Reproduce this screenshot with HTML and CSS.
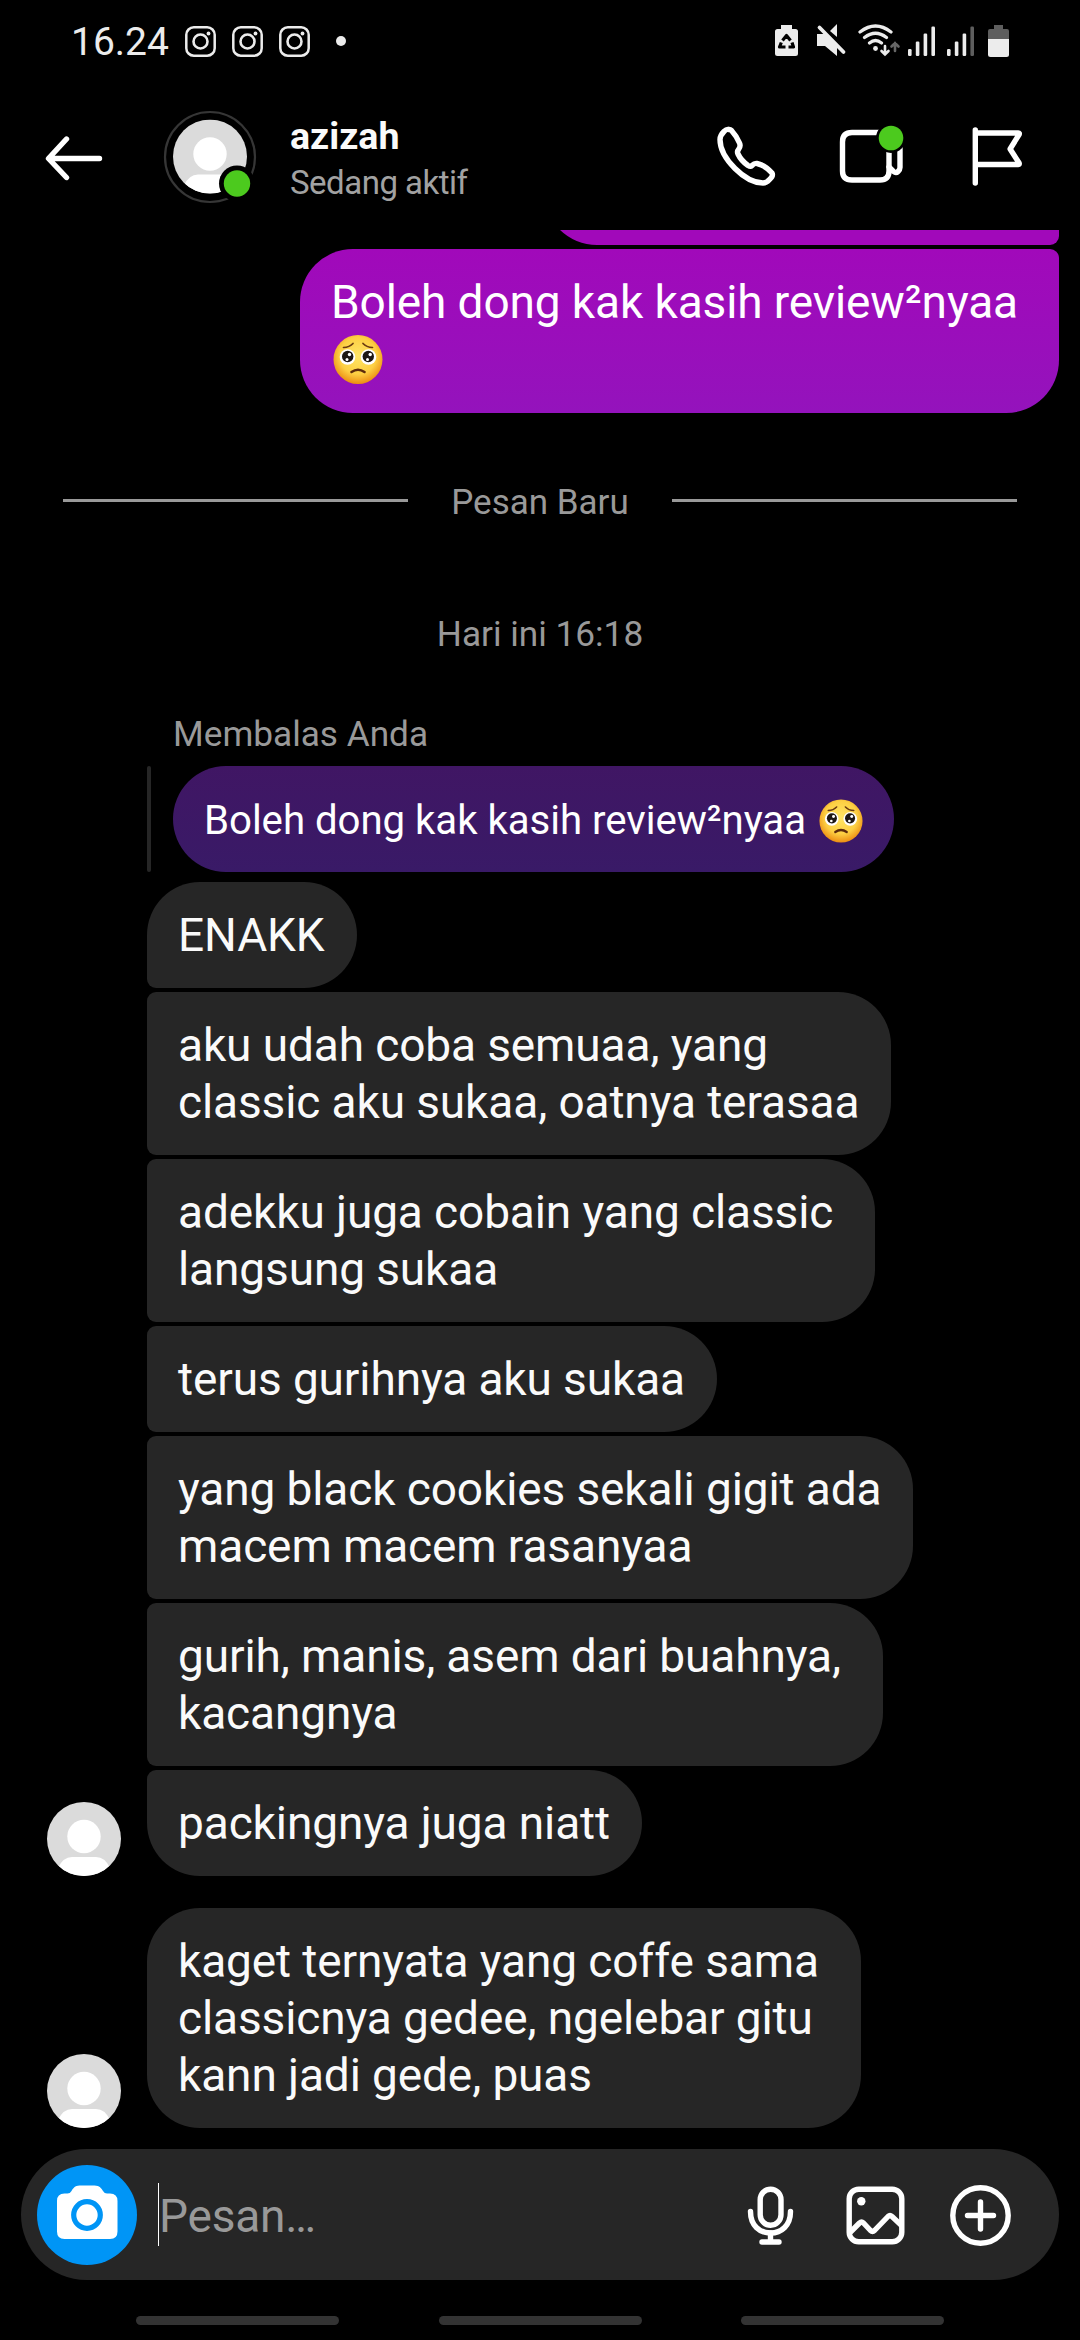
FILE: index.html
```html
<!DOCTYPE html>
<html lang="id">
<head>
<meta charset="utf-8">
<title>azizah</title>
<link rel="stylesheet" href="styles.css">
</head>
<body>
<svg class="defs" width="0" height="0">
  <defs>
    <radialGradient id="face" cx="50%" cy="42%" r="58%">
      <stop offset="0" stop-color="#ffe566"/><stop offset=".65" stop-color="#fdcf43"/><stop offset="1" stop-color="#ec8d12"/>
    </radialGradient>
    <clipPath id="disc"><circle cx="37" cy="37" r="37"/></clipPath>
    <symbol id="pleading" viewBox="0 0 50 50">
      <circle cx="25" cy="25" r="24.5" fill="url(#face)"/>
      <circle cx="14.500" cy="22.500" r="7.800" fill="#fff"/>
      <circle cx="35.500" cy="22.500" r="7.800" fill="#fff"/>
      <circle cx="14.700" cy="22" r="5.700" fill="#1d1715"/>
      <circle cx="35.300" cy="22" r="5.700" fill="#1d1715"/>
      <circle cx="16.500" cy="20" r="1.700" fill="#fff"/><circle cx="37.200" cy="20" r="1.700" fill="#fff"/>
      <circle cx="14" cy="25" r="1.500" fill="#fff"/><circle cx="34.500" cy="25" r="1.500" fill="#fff"/>
      <path d="M10.500 13q6-.2 9.500-4M39.500 13q-6-.2-9.500-4" fill="none" stroke="#6b3a10" stroke-width="1.700" stroke-linecap="round"/>
      <path d="M18.500 37.500q6.500-4.500 13 0" fill="none" stroke="#5c2a0c" stroke-width="2.600" stroke-linecap="round"/>
    </symbol>
    <symbol id="person" viewBox="0 0 74 74">
      <g clip-path="url(#disc)">
        <rect width="74" height="74" fill="#dbdbdb"/>
        <circle cx="37" cy="34.500" r="16.700" fill="#fff"/>
        <path d="M11 66q5-11 14-11h24q9 0 14 11v10H11z" fill="#fff"/>
      </g>
    </symbol>
    <symbol id="insta" viewBox="0 0 31 31">
      <rect x="1.300" y="1.300" width="28.400" height="28.400" rx="7.500" fill="none" stroke="#ececec" stroke-width="2.500"/>
      <circle cx="15.500" cy="15.500" r="7" fill="none" stroke="#ececec" stroke-width="2.600"/>
      <circle cx="23.500" cy="7.500" r="1.900" fill="#ececec"/>
    </symbol>
  </defs>
</svg>
<div class="screen">
  <div class="status">
    <span class="clock">16.24</span>
    <div class="notifs">
      <svg width="31" height="31"><use href="#insta"/></svg>
      <svg width="31" height="31"><use href="#insta"/></svg>
      <svg width="31" height="31"><use href="#insta"/></svg>
      <i class="more"></i>
    </div>
    <svg class="system" width="236" height="34" viewBox="774 24 236 34" fill="#ececec">
      <path d="M781 25h11v4h3.500q2.500 0 2.500 2.500v22q0 2.500-2.500 2.500h-18q-2.500 0-2.500-2.500v-22q0-2.500 2.500-2.500h3.500z"/>
      <g fill="none" stroke="#000" stroke-width="3.200" stroke-linejoin="round"><path d="M782.500 40.500l4-5 4 5M792 42.500l1.500 4.500h-5M785.500 47h-6l1.800-4.500"/></g>
      <path d="M830 31l7-7v13z"/>
      <path d="M817 34h8l12 13v9l-12-10h-8z"/>
      <path d="M822 26l24 24.500" stroke="#000" stroke-width="3"/>
      <path d="M819.500 27.500l24 24.500" stroke="#ececec" stroke-width="3.800" stroke-linecap="round"/>
      <g fill="none" stroke="#ececec" stroke-width="3.200" stroke-linecap="round">
        <path d="M860 32q15.500-12 31 0M864.500 37.500q11-8.500 22 0M869.500 43q6-5 12 0"/>
        <path d="M885 46v8M881.500 51l3.500 3.500 3.500-3.500" stroke-width="2.600"/>
        <path d="M895 51v-8M891.500 46.500l3.500-3.500 3.500 3.500" stroke="#666" stroke-width="2.600"/>
      </g>
      <circle cx="875.500" cy="48.500" r="2.400"/>
      <g><rect x="908" y="49" width="3.600" height="7" rx="1.200"/><rect x="915.800" y="41.500" width="3.600" height="14.500" rx="1.200"/><rect x="923.600" y="33.500" width="3.600" height="22.500" rx="1.200"/><rect x="931.400" y="26.500" width="3.600" height="29.500" rx="1.200"/></g>
      <g><rect x="947" y="49" width="3.600" height="7" rx="1.200"/><rect x="954.800" y="41.500" width="3.600" height="14.500" rx="1.200"/><rect x="962.600" y="33.500" width="3.600" height="22.500" rx="1.200"/><rect x="970.400" y="26.500" width="3.600" height="29.500" rx="1.200" fill="#5e5e5e"/></g>
      <path d="M994 25h9v4h4q2 0 2 2v8h-21v-8q0-2 2-2h4z" fill="#5e5e5e"/>
      <path d="M988 39h21v15.500q0 2.500-2.500 2.500h-16q-2.500 0-2.500-2.500z"/>
    </svg>
  </div>

  <div class="header">
    <svg class="back" width="58" height="46" viewBox="0 0 58 46" fill="none" stroke="#fff" stroke-width="5.400" stroke-linecap="round" stroke-linejoin="round"><path d="M54.500 22.500H4M21.500 3L3.500 22.500l18 19"/></svg>
    <svg class="avatar" width="94" height="94" viewBox="0 0 94 94">
      <circle cx="47" cy="47" r="45" fill="none" stroke="#363636" stroke-width="2.200"/>
      <use href="#person" x="10" y="9.500" width="74" height="74"/>
      <circle cx="74" cy="73.500" r="18" fill="#000"/>
      <circle cx="74" cy="73.500" r="13.200" fill="#4cca1e"/>
    </svg>
    <div class="who">
      <div class="name">azizah</div>
      <div class="active">Sedang aktif</div>
    </div>
    <svg class="actions" width="308" height="64" viewBox="716 125 308 64" fill="none" stroke="#fff" stroke-width="5.400" stroke-linecap="round" stroke-linejoin="round">
      <path d="M728.500 129.500q-2-.5-4.500 2-4 4-4 8c0 10 7 21 15 29s18 14.500 28 14.500q3.500 0 6.500-3.500 4-3.500 2.500-6.500-7-8-15-9.500-2.500-.5-5 2-1.500 1.500-4 0-7-5-10-11.500-1.200-2.500.5-4.500 2.500-3 1-6.500-3-7-8-12.500-1.300-1.300-3-1z"/>
      <path d="M880 132.500h-28q-9.500 0-9.500 9.500v29q0 9 9.500 9h28q9 0 9-9v-27"/>
      <path d="M889 167l4.500 4.500q2.500 2 4.500 0t2-4v-19"/>
      <circle cx="891" cy="138" r="15" fill="#000" stroke="none"/>
      <circle cx="891" cy="138" r="12.300" fill="#4cca1e" stroke="none"/>
      <path d="M975.300 130v53M975.300 133h43q1.500 0 .8 1.500l-9 14.500 9 14q.6 1.500-.8 1.500h-43"/>
    </svg>
  </div>

  <div class="chat">
    <div class="out prev"></div>
    <div class="out">Boleh dong kak kasih review²nyaa<br><svg class="emoji" width="50" height="51"><use href="#pleading"/></svg></div>

    <div class="divider"><i></i><span>Pesan Baru</span><i></i></div>
    <div class="time">Hari ini 16:18</div>
    <div class="label">Membalas Anda</div>
    <div class="reply">
      <i></i>
      <div class="quote">Boleh dong kak kasih review²nyaa <svg width="44" height="44"><use href="#pleading"/></svg></div>
    </div>
    <div class="in first">ENAKK</div>
    <div class="in">aku udah coba semuaa, yang<br>classic aku sukaa, oatnya terasaa</div>
    <div class="in wrapped">adekku juga cobain yang classic<br>langsung sukaa</div>
    <div class="in">terus gurihnya aku sukaa</div>
    <div class="in widest">yang black cookies sekali gigit ada<br>macem macem rasanyaa</div>
    <div class="in wrapped">gurih, manis, asem dari buahnya,<br>kacangnya</div>
    <div class="row">
      <svg width="74" height="74"><use href="#person"/></svg>
      <div class="in last">packingnya juga niatt</div>
    </div>
    <div class="row alone">
      <svg width="74" height="74"><use href="#person"/></svg>
      <div class="in single wrapped">kaget ternyata yang coffe sama<br>classicnya gedee, ngelebar gitu<br>kann jadi gede, puas</div>
    </div>
  </div>

  <div class="composer">
    <svg class="camera" width="100" height="100" viewBox="0 0 100 100">
      <circle cx="50" cy="50" r="50" fill="#0095f6"/>
      <path d="M42.500 20.500h15c5 0 7 3 8.500 5.500q1.500 2.500 4 2.500h3q7.500 0 7.500 7.500v30.500q0 7.500-7.500 7.500H27.500q-7.500 0-7.500-7.500V36q0-7.500 7.500-7.500h3q2.500 0 4-2.500c1.500-2.500 3.500-5.500 8-5.500z" fill="#fff"/>
      <circle cx="50" cy="50" r="13.300" fill="none" stroke="#0095f6" stroke-width="5.200"/>
    </svg>
    <i class="caret"></i>
    <span class="placeholder">Pesan…</span>
    <svg class="tools" width="266" height="64" viewBox="746 2182 266 64" fill="none" stroke="#fff" stroke-width="5.400" stroke-linecap="round" stroke-linejoin="round">
      <rect x="760.200" y="2188.200" width="20.800" height="36" rx="10.400"/>
      <path d="M750.500 2210.500c0 14 9 21.500 20 21.500s20-7.500 20-21.500" />
      <path d="M770.500 2232v8M762 2241h17"/>
      <rect x="849.200" y="2188.200" width="52.600" height="52.600" rx="9.500"/>
      <circle cx="861.300" cy="2200.300" r="4.200" fill="#fff" stroke="none"/>
      <path d="M850.500 2231l9-9q2-1.800 4 0l7 7.500q2 1.800 4 0l13.500-14q2-1.800 4 0l9 8.500"/>
      <circle cx="980.500" cy="2214.500" r="27.700"/>
      <path d="M980.500 2201v27M967.500 2214.500h26"/>
    </svg>
  </div>
  <div class="nav"><i></i><i></i><i></i></div>
</div>
</body>
</html>
```
FILE: styles.css
```css
* { box-sizing: border-box; }
body {
  margin: 0;
  background: #000;
  color: #fafafa;
  font-family: Roboto, "Liberation Sans", sans-serif;
}
svg { display: block; flex: none; }
i { display: block; flex: none; }
.defs { height: 0; }
.screen {
  width: 1080px;
  height: 2340px;
  overflow: hidden;
  display: flex;
  flex-direction: column;
}

.status {
  height: 82px;
  display: flex;
  align-items: center;
  padding: 0 70px 0 71px;
  color: #ececec;
}
.clock { width: 114px; font-size: 39px; line-height: 46px; padding-top: 2px; }
.notifs { display: flex; align-items: center; gap: 16px; }
.more { width: 10px; height: 10px; margin-left: 10px; border-radius: 50%; background: #ececec; }
.system { margin-left: auto; }

.header {
  height: 148px;
  display: flex;
  align-items: center;
  padding: 1px 56px 0 45px;
}
.avatar { margin-left: 60px; }
.back { margin-top: 4px; }
.who { margin-left: 33px; padding-top: 7px; }
.name { font-size: 37.6px; font-weight: 700; line-height: 46px; }
.active { font-size: 33px; line-height: 48px; letter-spacing: -0.5px; color: #a2a2a2; }
.actions { margin-left: auto; }

.chat {
  height: 1919px;
  display: flex;
  flex-direction: column;
  align-items: flex-start;
  padding-left: 147px;
  font-size: 46px;
  line-height: 57px;
  letter-spacing: -0.11px;
}
.out {
  align-self: flex-end;
  width: 759px;
  height: 164px;
  margin: 4px 21px 0 0;
  padding: 24.5px 31px;
  border-radius: 53px 9px 53px 53px;
  background: linear-gradient(#a109ba, #9413bc);
  color: #fff;
}
.out.prev {
  width: 515px;
  height: 106px;
  margin-top: -91px;
  border-radius: 53px 9px 9px 53px;
  background: #a109ba;
  clip-path: inset(91px 0 0 0);
}
.emoji { margin: 3px 0 0 2px; }

.divider {
  width: 954px;
  margin: 66px 0 0 -84px;
  display: flex;
  align-items: center;
  justify-content: space-between;
  font-size: 35px;
  line-height: 48px;
  letter-spacing: 0;
  color: #999;
}
.divider i { width: 345px; height: 3px; margin-top: -5px; background: #999; }
.time, .label { font-size: 35.2px; line-height: 48px; letter-spacing: 0; color: #999; }
.time { width: 1080px; margin: 83px 0 0 -147px; text-align: center; }
.label { margin: 52px 0 8px 26px; }
.reply { display: flex; gap: 22px; }
.reply i { width: 4px; height: 106px; border-radius: 2px; background: #262626; }
.quote {
  height: 106px;
  padding: 3px 31px 0;
  border-radius: 53px;
  display: flex;
  align-items: center;
  gap: 13px;
  font-size: 40.2px;
  letter-spacing: -0.04px;
  color: #fff;
  background: linear-gradient(#401664, #391a67);
}
.in {
  padding: 24.5px 32px 24.5px 31px;
  margin-top: 4px;
  border-radius: 9px 53px 53px 9px;
  background: #262626;
  white-space: nowrap;
}
.in.wrapped { padding-right: 42px; }
.in.widest { width: 766px; }
.in.first { margin-top: 10px; border-top-left-radius: 53px; }
.in.last { border-bottom-left-radius: 53px; }
.in.single { border-radius: 53px; margin-top: 0; }
.row { display: flex; align-items: flex-end; gap: 26px; margin-left: -100px; }
.row.alone { margin-top: 32px; }

.composer {
  height: 131px;
  margin: 0 21px;
  padding: 0 47px 0 16px;
  border-radius: 66px;
  background: #262626;
  display: flex;
  align-items: center;
}
.caret { width: 1px; height: 63px; margin-left: 21px; background: #fff; }
.placeholder { font-size: 46px; line-height: 57px; letter-spacing: -0.2px; color: #999; margin-top: 3px; }
.tools { margin-left: auto; }
.nav {
  height: 60px;
  padding: 36px 136px 0;
  display: flex;
  justify-content: space-between;
}
.nav i { width: 203px; height: 9px; border-radius: 5px; background: #333; }
```
